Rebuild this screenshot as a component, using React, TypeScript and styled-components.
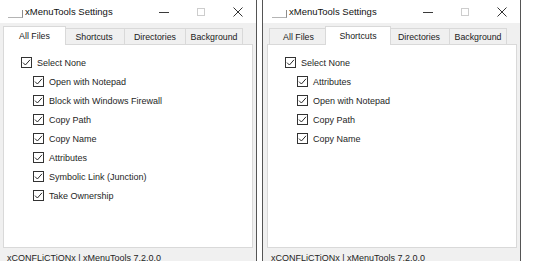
import React from 'react';
import styled, { createGlobalStyle } from 'styled-components';

const Global = createGlobalStyle`
  html, body { margin: 0; padding: 0; background: #ffffff; overflow: hidden; }
  body { font-family: "Liberation Sans", Arial, sans-serif; }
`;

const Page = styled.div`
  display: flex;
  align-items: flex-start;
  gap: 5px;
  margin-left: -2px;
  height: 261px;
  overflow: hidden;
`;

const Window = styled.div`
  flex-shrink: 0;
  width: 257px;
  height: 290px;
  border: 1px solid #555555;
  border-top: none;
  background: #f0f0f0;
  display: flex;
  flex-direction: column;
`;

const TitleBar = styled.div`
  height: 23px;
  background: #ffffff;
  display: flex;
  align-items: center;
`;

const AppIcon = styled.div`
  width: 14px;
  height: 7px;
  margin: 5px 0 0 9px;
  border-right: 1px solid #8c8c8c;
  border-bottom: 1px solid #b4b4b4;
`;

const Title = styled.div`
  margin-left: 2px;
  font-size: 9.5px;
  color: #111;
  white-space: nowrap;
`;

const Captions = styled.div`
  margin-left: auto;
  display: flex;
  height: 100%;
`;

const CaptionButton = styled.div`
  width: 37px;
  height: 100%;
  display: flex;
  align-items: center;
  justify-content: center;
`;

const MinGlyph = styled.div`
  width: 10px;
  height: 1px;
  background: #3a3a3a;
  margin-top: 1px;
`;

const MaxGlyph = styled.div`
  width: 6px;
  height: 6px;
  border: 1px solid #cdcdcd;
`;

const Body = styled.div`
  flex: 1;
  display: flex;
  flex-direction: column;
  padding: 3px 3px 0 4px;
`;

const TabStrip = styled.div`
  display: flex;
  align-items: flex-end;
  height: 18px;
  padding-left: 2px;
  position: relative;
  z-index: 1;
`;

const Tab = styled.div<{ $w: number; $active?: boolean }>`
  box-sizing: border-box;
  width: ${p => (p.$active ? p.$w + 4 : p.$w)}px;
  height: ${p => (p.$active ? 19 : 16)}px;
  margin: 0 ${p => (p.$active ? -3 : -1)}px ${p => (p.$active ? -1 : 0)}px ${p => (p.$active ? -2 : 0)}px;
  background: ${p => (p.$active ? '#ffffff' : '#f0f0f0')};
  border: 1px solid #d9d9d9;
  border-bottom: none;
  position: relative;
  z-index: ${p => (p.$active ? 2 : 1)};
  display: flex;
  align-items: center;
  justify-content: center;
  font-size: 8.8px;
  color: #1a1a1a;
  white-space: nowrap;
  padding-top: ${p => (p.$active ? 0 : 1)}px;
`;

const Panel = styled.div`
  box-sizing: border-box;
  width: 250px;
  height: 204px;
  background: #ffffff;
  border: 1px solid #d9d9d9;
  padding: 8px 0 0 17px;
  display: flex;
  flex-direction: column;
`;

const Row = styled.div<{ $child?: boolean }>`
  display: flex;
  align-items: center;
  height: 19px;
  gap: 5px;
  padding-left: ${p => (p.$child ? 12 : 0)}px;
  font-size: 9px;
  color: #1e1e1e;
  white-space: nowrap;
`;

const Box = styled.div`
  box-sizing: border-box;
  width: 11px;
  height: 11px;
  border: 1px solid #333333;
  background: #ffffff;
  display: flex;
  align-items: center;
  justify-content: center;
  flex-shrink: 0;
`;

const Status = styled.div`
  padding: 5px 0 0 4px;
  font-size: 9px;
  color: #1e1e1e;
  white-space: nowrap;
`;

const Check = () => (
  <svg width="9" height="9" viewBox="0 0 9 9">
    <path d="M1 4.6 L3.4 7 L8 1.8" fill="none" stroke="#2b2b2b" strokeWidth="1" />
  </svg>
);

const CloseGlyph = () => (
  <svg width="10" height="10" viewBox="0 0 10 10">
    <path d="M0.5 0.5 L9.5 9.5 M9.5 0.5 L0.5 9.5" stroke="#333" strokeWidth="1" />
  </svg>
);

const Item = ({ label, child }: { label: string; child?: boolean }) => (
  <Row $child={child}>
    <Box>
      <Check />
    </Box>
    {label}
  </Row>
);

const tabs: [string, number][] = [
  ['All Files', 59],
  ['Shortcuts', 62],
  ['Directories', 62],
  ['Background', 58],
];

const SettingsWindow = ({ active, items }: { active: number; items: string[] }) => (
  <Window>
    <TitleBar>
      <AppIcon />
      <Title>xMenuTools Settings</Title>
      <Captions>
        <CaptionButton>
          <MinGlyph />
        </CaptionButton>
        <CaptionButton>
          <MaxGlyph />
        </CaptionButton>
        <CaptionButton>
          <CloseGlyph />
        </CaptionButton>
      </Captions>
    </TitleBar>
    <Body>
      <TabStrip>
        {tabs.map(([name, w], i) => (
          <Tab key={name} $w={w} $active={i === active}>
            {name}
          </Tab>
        ))}
      </TabStrip>
      <Panel>
        <Item label="Select None" />
        {items.map(it => (
          <Item key={it} label={it} child />
        ))}
      </Panel>
      <Status>xCONFLiCTiONx | xMenuTools 7.2.0.0</Status>
    </Body>
  </Window>
);

export default function App() {
  return (
    <>
      <Global />
      <Page>
        <SettingsWindow
          active={0}
          items={[
            'Open with Notepad',
            'Block with Windows Firewall',
            'Copy Path',
            'Copy Name',
            'Attributes',
            'Symbolic Link (Junction)',
            'Take Ownership',
          ]}
        />
        <SettingsWindow
          active={1}
          items={['Attributes', 'Open with Notepad', 'Copy Path', 'Copy Name']}
        />
      </Page>
    </>
  );
}
